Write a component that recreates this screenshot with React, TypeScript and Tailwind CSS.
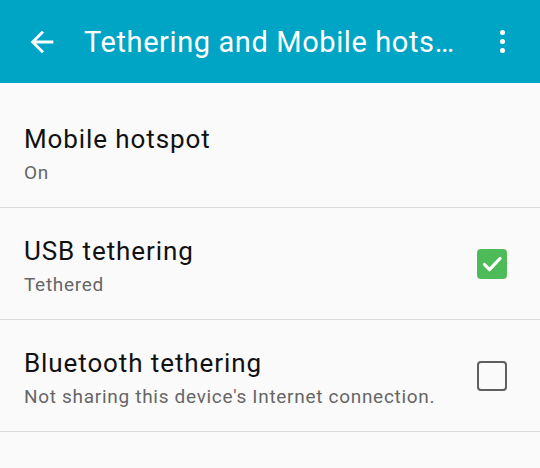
import React from 'react';

interface RowProps {
  title: string;
  subtitle: string;
  checkbox?: 'checked' | 'unchecked';
}

const Checkbox = ({ checked }: { checked: boolean }) =>
  checked ? (
    <div className="w-[30px] h-[30px] rounded-[4px] bg-[#4cbb58] flex items-center justify-center">
      <svg width="22" height="22" viewBox="0 0 22 22" fill="none">
        <path d="M3.5 11.5l5 5.2L19 5.5" stroke="#fff" strokeWidth={3.2} strokeLinecap="round" strokeLinejoin="round" />
      </svg>
    </div>
  ) : (
    <div className="w-[30px] h-[30px] rounded-[4px] border-[2.5px] border-[#5f5f5f]" />
  );

const Row = ({ title, subtitle, checkbox }: RowProps) => (
  <div className="h-[112px] border-b border-[#dcdcdc] flex pl-6 pr-[33px]">
    <div className="flex-1 pt-[27px]">
      <div className="text-[26px] leading-[32px] tracking-[0.9px] text-[#111]">{title}</div>
      <div className="text-[19px] leading-[24px] tracking-[0.7px] mt-[6px] text-[#666]">{subtitle}</div>
    </div>
    {checkbox && (
      <div className="self-center">
        <Checkbox checked={checkbox === 'checked'} />
      </div>
    )}
  </div>
);

export default function App() {
  return (
    <div className="w-[540px] h-[468px] bg-[#fafafa] overflow-hidden" style={{ fontFamily: 'Roboto, "Noto Sans", sans-serif' }}>
      <div className="h-[83px] bg-[#00a5c5] flex items-center text-white">
        <div className="w-[84px] flex items-center pl-[25px]">
          <svg width="34" height="34" viewBox="0 0 24 24" fill="white">
            <path d="M20 11H7.83l5.59-5.59L12 4l-8 8 8 8 1.41-1.41L7.83 13H20v-2z" />
          </svg>
        </div>
        <div className="w-[378px] truncate text-[29px] leading-[36px] tracking-[0.6px]">Tethering and Mobile hotspot</div>
        <div className="flex-1 flex flex-col items-center gap-[4px] pl-[2px]">
          <span className="w-[5px] h-[5px] rounded-full bg-white" />
          <span className="w-[5px] h-[5px] rounded-full bg-white" />
          <span className="w-[5px] h-[5px] rounded-full bg-white" />
        </div>
      </div>
      <div className="pt-[13px]">
        <Row title="Mobile hotspot" subtitle="On" />
        <Row title="USB tethering" subtitle="Tethered" checkbox="checked" />
        <Row title="Bluetooth tethering" subtitle="Not sharing this device's Internet connection." checkbox="unchecked" />
      </div>
    </div>
  );
}
